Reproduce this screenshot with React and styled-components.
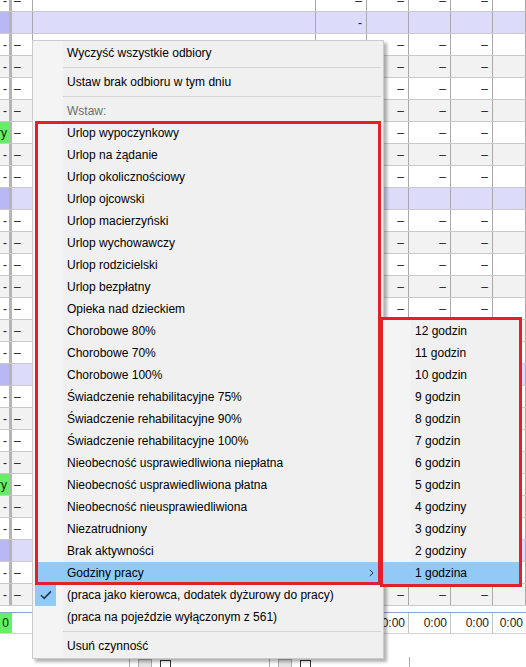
import React from "react"
import styled, { createGlobalStyle } from "styled-components"

const GlobalStyle = createGlobalStyle`
  html, body { margin: 0; padding: 0; }
  body {
    background: #fff;
    font-family: "Segoe UI", "Liberation Sans", Arial, sans-serif;
    font-size: 12px;
    color: #000;
  }
`

const COLS = "12px 21px 283px 51px 42px 42px 42px 1fr"

const Screen = styled.div`
  position: relative;
  width: 526px;
  height: 667px;
  overflow: hidden;
  background: #fff;
`

const Table = styled.div`
  display: flex;
  flex-direction: column;
  margin-top: -10px;
`

const Row = styled.div`
  display: grid;
  grid-template-columns: ${COLS};
  height: 22px;
  box-sizing: border-box;
  border-bottom: 1px solid #c9c9c9;
  background: ${p => (p.$tone === "band" ? "#dcdcfa" : p.$tone === "alt" ? "#f2f2f2" : "#fff")};
`

const Cell = styled.div`
  display: flex;
  align-items: center;
  justify-content: ${p => (p.$left ? "flex-start" : "flex-end")};
  padding: ${p => (p.$left ? "0 0 0 2px" : "0 4px 0 0")};
  border-right: 1px solid #a9a9a9;
  overflow: hidden;
  white-space: nowrap;
  color: #1a1a1a;
  background: ${p => p.$bg || "transparent"};
`

const KeyCell = styled(Cell)`
  padding: 0 2px 0 0;
  border-right: 3px solid #b4b4b4;
`

const SumRow = styled.div`
  display: grid;
  grid-template-columns: ${COLS};
  height: 22px;
  margin-top: 6px;
  box-sizing: border-box;
  border-top: 1px solid #8ea4c0;
  border-bottom: 1px solid #d2d2d2;
`

const SumCell = styled.div`
  display: flex;
  align-items: center;
  justify-content: flex-end;
  padding-right: 3px;
  border-right: ${p => (p.$open ? "none" : "1px solid #c4c4c4")};
  white-space: nowrap;
  overflow: hidden;
  color: #1a1a1a;
  background: ${p => p.$bg || "transparent"};
`

const BottomBar = styled.div`
  display: flex;
  margin-top: 23px;
  padding-left: 129px;
  height: 14px;
`

const BarGroup = styled.div`
  display: flex;
  align-items: flex-start;
  gap: 8px;
  width: ${p => p.$w}px;
  box-sizing: border-box;
  padding: 2px 0 0 8px;
  border-left: 1px solid #adadad;
`

const BarButton = styled.div`
  width: 14px;
  height: 14px;
  box-sizing: border-box;
  border: 1px solid #adadad;
  background: #e5e5e5;
`

const BarCheck = styled.div`
  width: 11px;
  height: 11px;
  margin-top: 1px;
  box-sizing: border-box;
  border: 1px solid #333;
  background: #fff;
`

const Menu = styled.div`
  position: absolute;
  left: 32px;
  top: 40px;
  width: 352px;
  box-sizing: border-box;
  padding: 1px 2px;
  border: 1px solid #cbcbcb;
  background: linear-gradient(to right, #f4f4f4 0, #f4f4f4 30px, #f0f0f0 30px);
  box-shadow: 3px 3px 3px rgba(0, 0, 0, 0.3);
`

const SubMenu = styled.div`
  position: absolute;
  left: 380px;
  top: 317px;
  width: 142px;
  box-sizing: border-box;
  border: 3px solid #e2202c;
  background: linear-gradient(to right, #f4f4f4 0, #f4f4f4 28px, #f0f0f0 28px);
`

const Item = styled.div`
  display: flex;
  align-items: center;
  height: 22px;
  padding-left: ${p => (p.$sub ? "32px" : "0")};
  color: ${p => (p.$disabled ? "#6d6d6d" : "#000")};
  background: ${p => (p.$active ? "#91c9f7" : "transparent")};
  white-space: nowrap;
`

const IconSlot = styled.span`
  display: flex;
  align-items: center;
  justify-content: center;
  width: 21px;
  height: 22px;
  margin-right: 11px;
  background: ${p => (p.$checked ? "#91c9f7" : "transparent")};
`

const Arrow = styled.span`
  display: flex;
  margin-left: auto;
  margin-right: 7px;
`

const Separator = styled.div`
  height: 1px;
  margin: 3px 0 3px 28px;
  background: #d5d5d5;
`

const Marked = styled.div`
  position: relative;
  &::after {
    content: "";
    position: absolute;
    inset: -1px 0 -1px 0;
    border: 3px solid #e2202c;
    pointer-events: none;
  }
`

const buildRows = () => {
  const rows = [{ tone: "plain", band: false }]
  for (let b = 0; b < 4; b++) {
    rows.push({ tone: "band", band: true })
    const n = b === 3 ? 2 : 7
    for (let i = 0; i < n; i++) {
      rows.push({ tone: i % 2 ? "alt" : "plain", band: false, flag: (b === 0 || b === 2) && i === 4 })
    }
  }
  return rows
}

const rows = buildRows()

const leaveItems = [
  "Urlop wypoczynkowy",
  "Urlop na żądanie",
  "Urlop okolicznościowy",
  "Urlop ojcowski",
  "Urlop macierzyński",
  "Urlop wychowawczy",
  "Urlop rodzicielski",
  "Urlop bezpłatny",
  "Opieka nad dzieckiem",
  "Chorobowe 80%",
  "Chorobowe 70%",
  "Chorobowe 100%",
  "Świadczenie rehabilitacyjne 75%",
  "Świadczenie rehabilitacyjne 90%",
  "Świadczenie rehabilitacyjne 100%",
  "Nieobecność usprawiedliwiona niepłatna",
  "Nieobecność usprawiedliwiona płatna",
  "Nieobecność nieusprawiedliwiona",
  "Niezatrudniony",
  "Brak aktywności",
]

const hours = [
  "12 godzin", "11 godzin", "10 godzin", "9 godzin", "8 godzin", "7 godzin",
  "6 godzin", "5 godzin", "4 godziny", "3 godziny", "2 godziny", "1 godzina",
]

const Check = () => (
  <svg width="12" height="10" viewBox="0 0 12 10">
    <path d="M1 5.2 L4.2 8.4 L11 1.4" fill="none" stroke="#1d3b5a" strokeWidth="1.6" />
  </svg>
)

const Chevron = () => (
  <svg width="5" height="8" viewBox="0 0 5 8">
    <path d="M0.8 0.8 L4 4 L0.8 7.2" fill="none" stroke="#333" strokeWidth="1" />
  </svg>
)

const MenuItem = ({ children, ...rest }) => (
  <Item {...rest}>
    <IconSlot $checked={rest.$checked}>{rest.$checked && <Check />}</IconSlot>
    {children}
    {rest.$submenu && (
      <Arrow>
        <Chevron />
      </Arrow>
    )}
  </Item>
)

const App = () => {
  return (
    <Screen>
      <GlobalStyle />
      <Table>
        {rows.map((r, i) =>
          r.band ? (
            <Row key={i} $tone="band">
              <KeyCell $bg="#b8b8f5" />
              <Cell />
              <Cell />
              <Cell>-</Cell>
              <Cell />
              <Cell />
              <Cell />
              <Cell />
            </Row>
          ) : (
            <Row key={i} $tone={r.tone}>
              {r.flag ? <KeyCell $bg="#64ef64">ry</KeyCell> : <KeyCell>-</KeyCell>}
              <Cell $left>–</Cell>
              <Cell />
              <Cell>–</Cell>
              <Cell>–</Cell>
              <Cell>–</Cell>
              <Cell>–</Cell>
              <Cell />
            </Row>
          )
        )}
        <SumRow>
          <SumCell $bg="#64ef64" $open>0</SumCell>
          <SumCell $open />
          <SumCell $open />
          <SumCell $open />
          <SumCell>0:00</SumCell>
          <SumCell>0:00</SumCell>
          <SumCell>0:00</SumCell>
          <SumCell $open>0:00</SumCell>
        </SumRow>
        <BottomBar>
          <BarGroup $w={143}>
            <BarButton />
            <BarCheck />
          </BarGroup>
          <BarGroup $w={143}>
            <BarButton />
            <BarCheck />
          </BarGroup>
          <BarGroup $w={120} />
        </BottomBar>
      </Table>

      <Menu>
        <MenuItem>Wyczyść wszystkie odbiory</MenuItem>
        <Separator />
        <MenuItem>Ustaw brak odbioru w tym dniu</MenuItem>
        <Separator />
        <MenuItem $disabled>Wstaw:</MenuItem>
        <Marked>
          {leaveItems.map(t => (
            <MenuItem key={t}>{t}</MenuItem>
          ))}
          <MenuItem $active $submenu>Godziny pracy</MenuItem>
        </Marked>
        <MenuItem $checked>(praca jako kierowca, dodatek dyżurowy do pracy)</MenuItem>
        <MenuItem>(praca na pojeździe wyłączonym z 561)</MenuItem>
        <Separator />
        <MenuItem>Usuń czynność</MenuItem>
      </Menu>

      <SubMenu>
        {hours.map((h, i) => (
          <Item key={h} $sub $active={i === hours.length - 1}>
            {h}
          </Item>
        ))}
      </SubMenu>
    </Screen>
  )
}

export default App
